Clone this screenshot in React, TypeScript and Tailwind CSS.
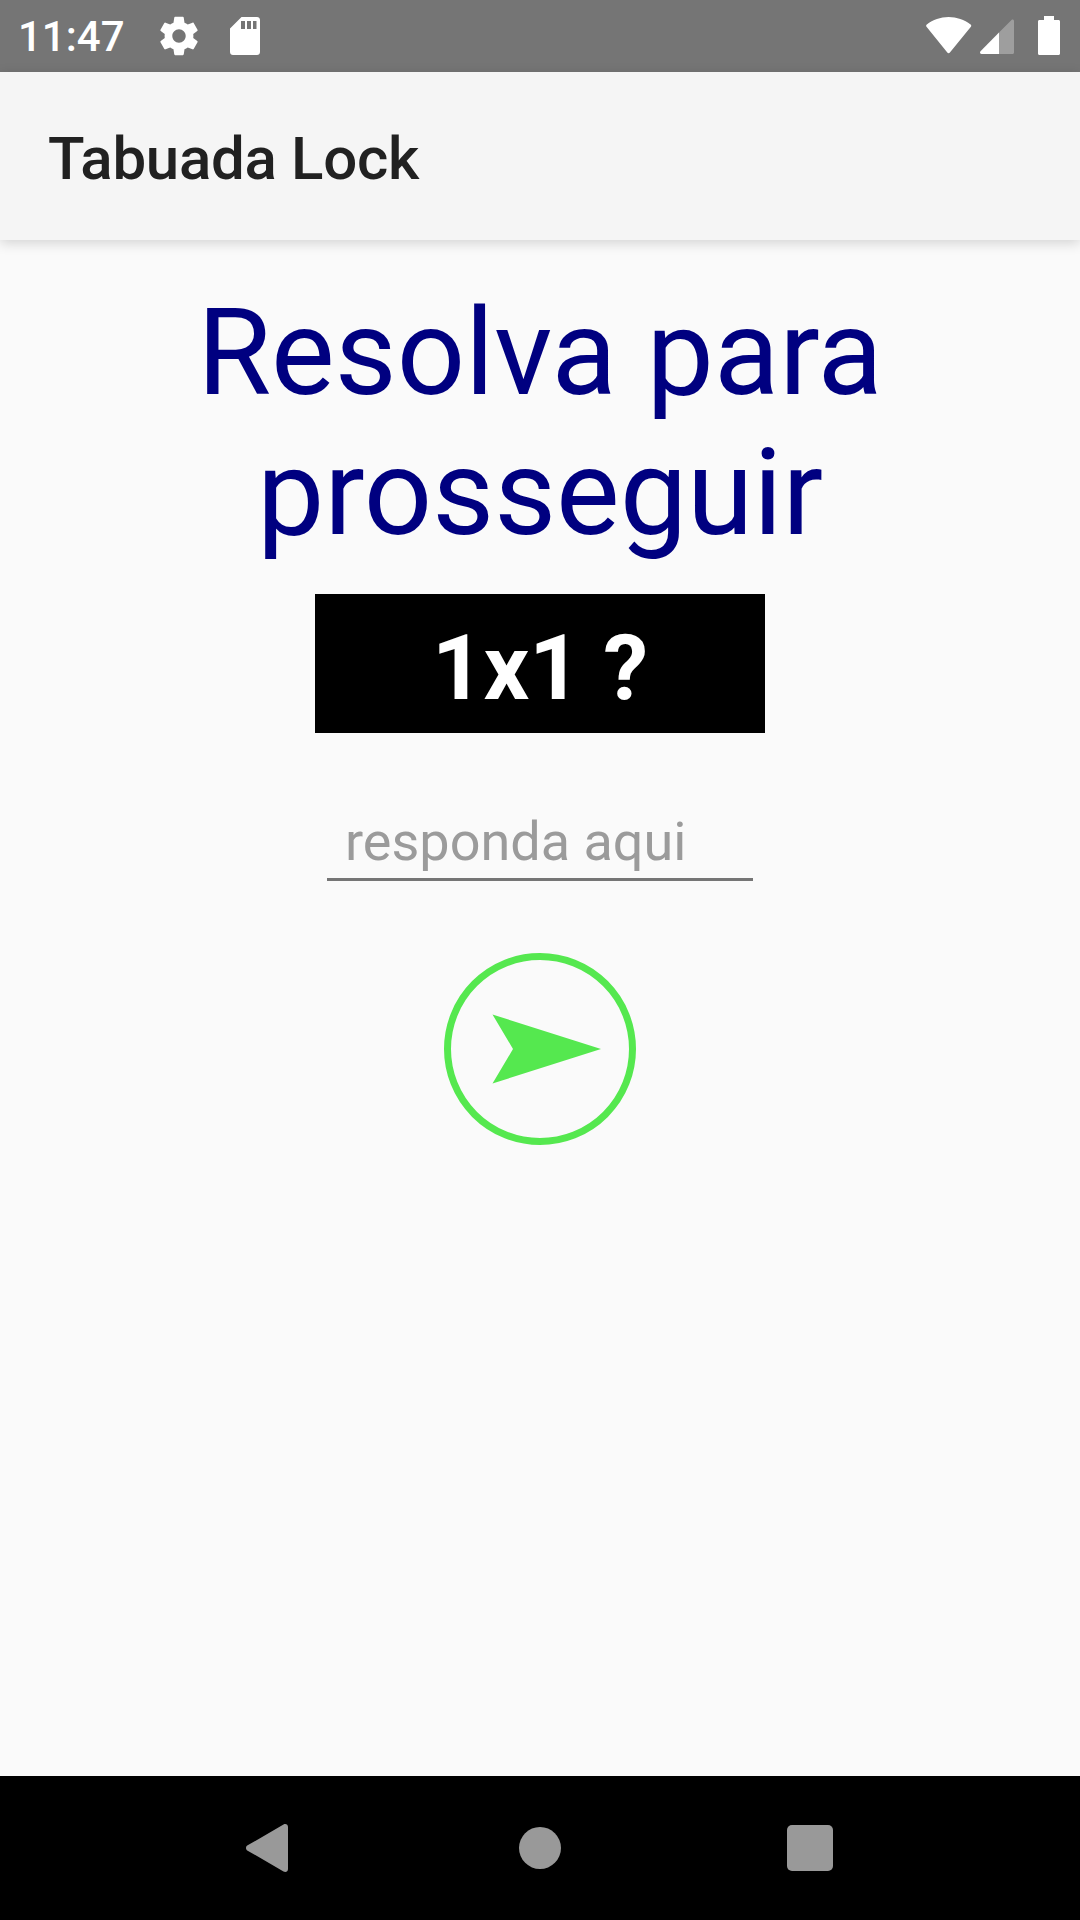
import { useState } from "react";

function StatusBar() {
  return (
    <header className="flex h-[72px] items-center bg-[#757575] pl-[18px] pr-5 text-white">
      <span className="w-[138px] pt-0.5 text-[42px] font-medium leading-none">11:47</span>
      <svg viewBox="0 0 24 24" className="size-[46px]" fill="currentColor">
        <path d="M19.43 12.98c.04-.32.07-.64.07-.98s-.03-.66-.07-.98l2.11-1.65c.19-.15.24-.42.12-.64l-2-3.46c-.12-.22-.39-.3-.61-.22l-2.49 1c-.52-.4-1.08-.73-1.69-.98l-.38-2.65C14.46 2.18 14.25 2 14 2h-4c-.25 0-.46.18-.49.42l-.38 2.65c-.61.25-1.17.59-1.69.98l-2.49-1c-.23-.09-.49 0-.61.22l-2 3.46c-.13.22-.07.49.12.64l2.11 1.65c-.04.32-.07.65-.07.98s.03.66.07.98l-2.11 1.65c-.19.15-.24.42-.12.64l2 3.46c.12.22.39.3.61.22l2.49-1c.52.4 1.08.73 1.69.98l.38 2.65c.03.24.24.42.49.42h4c.25 0 .46-.18.49-.42l.38-2.65c.61-.25 1.17-.59 1.69-.98l2.49 1c.23.09.49 0 .61-.22l2-3.46c.12-.22.07-.49-.12-.64l-2.11-1.65zM12 15.5c-1.93 0-3.5-1.57-3.5-3.5s1.57-3.5 3.5-3.5 3.5 1.57 3.5 3.5-1.57 3.5-3.5 3.5z" />
      </svg>
      <svg viewBox="0 0 30 38" className="ml-7 h-[38px] w-[30px]" fill="currentColor">
        <path d="M11.500 0H27c1.700 0 3 1.300 3 3v32c0 1.700-1.300 3-3 3H3c-1.700 0-3-1.300-3-3V11.500zM11 4v8h4V4zm6 0v8h4V4zm6 0v8h3.500V4z" />
      </svg>
      <div className="ml-auto flex items-center">
        <svg viewBox="0 0 46 40" className="h-10 w-[46px]" fill="currentColor">
          <path d="M.8 8.500C7 3.800 14.400 1 22.600 1s15.800 2.800 22 7.500c.8.7.8 1.500.3 2.200L23.900 36.500c-.7.9-1.900.9-2.600 0L.5 10.700C0 10 0 9.200.8 8.500z" />
        </svg>
        <svg viewBox="0 0 34 40" className="ml-2 h-10 w-[34px]" fill="currentColor">
          <path opacity=".3" d="M34 5v31.500c0 .9-.6 1.500-1.500 1.500H19V16.500L31.500 4C32.500 3 34 3.800 34 5z" />
          <path d="M19 16.500V38H1.500C0 38-.4 36.500.5 35.200z" />
        </svg>
        <svg viewBox="0 0 22 40" className="ml-6 h-10 w-[22px]" fill="currentColor">
          <path d="M6 0h10v4h4.500c.9 0 1.500.6 1.500 1.500v32c0 .9-.6 1.500-1.500 1.500h-19C.6 39 0 38.400 0 37.500v-32C0 4.600.6 4 1.500 4H6z" />
        </svg>
      </div>
    </header>
  );
}

function AppBar({ title }: { title: string }) {
  return (
    <div className="z-10 flex h-[168px] items-center bg-[#f5f5f5] pl-12 pt-[5px] shadow-[0_3px_12px_rgba(0,0,0,0.16)]">
      <h1 className="text-[60px] font-medium leading-[70px] tracking-[-0.3px] text-[#212121]">
        {title}
      </h1>
    </div>
  );
}

function NavigationBar() {
  return (
    <nav className="flex h-36 items-center justify-center bg-black text-[#999999]">
      <button className="flex w-[270px] justify-center" aria-label="Voltar">
        <svg viewBox="0 0 48 48" className="size-12" fill="currentColor">
          <path d="M1.200 21.600 37.500.5c2.200-1.200 4.500 0 4.500 2.500v42c0 2.500-2.300 3.700-4.500 2.500L1.200 26.400c-1.600-1-1.600-3.800 0-4.800z" />
        </svg>
      </button>
      <button className="flex w-[270px] justify-center" aria-label="Início">
        <span className="size-[42px] rounded-full bg-current" />
      </button>
      <button className="flex w-[270px] justify-center" aria-label="Recentes">
        <span className="size-[46px] rounded-[5px] bg-current" />
      </button>
    </nav>
  );
}

export default function App() {
  const [answer, setAnswer] = useState("");

  return (
    <div className="flex h-[1920px] w-[1080px] flex-col overflow-hidden bg-[#fafafa] font-[Roboto,sans-serif]">
      <StatusBar />
      <AppBar title="Tabuada Lock" />
      <main className="flex flex-1 flex-col items-center pt-[43px]">
        <h2 className="w-[800px] text-center text-[120px] leading-[140px] text-[#000080]">
          Resolva para prosseguir
        </h2>
        <p className="mt-[31px] flex h-[139px] w-[450px] items-center justify-center bg-black pt-[9px] text-[90px] font-bold leading-[105px] text-white">
          1x1 ?
        </p>
        <input
          value={answer}
          onChange={(e) => setAnswer(e.target.value)}
          placeholder="responda aqui"
          className="mt-[75px] h-[73px] w-[426px] border-b-3 border-[#757575] pb-1 pl-[18px] text-[54px] leading-[64px] outline-none placeholder:text-[#9b9b9b]"
        />
        <button className="mt-[72px]" aria-label="Enviar">
          <svg viewBox="0 0 192 192" className="size-48">
            <circle cx="96" cy="96" r="92.500" fill="none" stroke="#55e84f" strokeWidth="7" />
            <path d="M48.500 61.500 157 96 48.500 130.500 69 96z" fill="#55e84f" />
          </svg>
        </button>
      </main>
      <NavigationBar />
    </div>
  );
}
